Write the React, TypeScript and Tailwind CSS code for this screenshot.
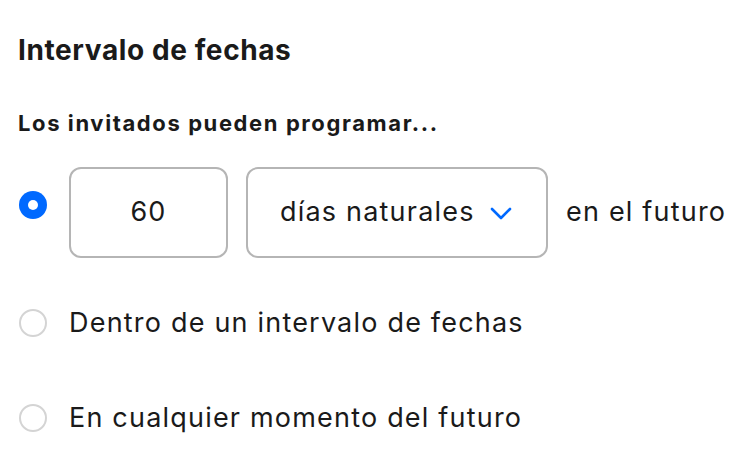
import { useState } from "react";

function Radio({ checked }: { checked: boolean }) {
  return checked ? (
    <span className="flex h-[28px] w-[28px] shrink-0 items-center justify-center rounded-full bg-[#0069ff]">
      <span className="block h-[10px] w-[10px] rounded-full bg-white" />
    </span>
  ) : (
    <span className="block h-[28px] w-[28px] shrink-0 rounded-full border-2 border-[#d4d4d4] bg-white" />
  );
}

export default function App() {
  const [choice] = useState("rolling");

  return (
    <div className="h-[456px] w-[756px] bg-white px-[18px] pt-[33px] font-['Inter',sans-serif] text-[#1a1a1a]">
      <h1 className="text-[28px] font-bold leading-[34px] tracking-[0.6px]">Intervalo de fechas</h1>
      <h2 className="mt-[42px] text-[22px] font-bold leading-[28px] tracking-[1.6px]">
        Los invitados pueden programar...
      </h2>

      {/* rolling days */}
      <div className="mt-[30px] flex items-start text-[27px] tracking-[1.2px]">
        <div className="mt-[24px] ml-[1px]">
          <Radio checked={choice === "rolling"} />
        </div>
        <div className="ml-[22px] flex h-[91px] w-[159px] items-center justify-center rounded-[12px] border-2 border-[#b5b5b5]">
          60
        </div>
        <div className="ml-[18px] flex h-[91px] w-[302px] items-center rounded-[12px] border-2 border-[#b5b5b5] pl-[32px]">
          <span>días naturales</span>
          <svg className="ml-[15px] mt-[2px]" width="22" height="13" viewBox="0 0 22 13" fill="none">
            <path d="M2 2l9 9 9-9" stroke="#0069ff" strokeWidth="2.6" strokeLinecap="round" strokeLinejoin="round" />
          </svg>
        </div>
        <div className="ml-[18px] flex h-[91px] items-center">en el futuro</div>
      </div>

      <div className="mt-[48px] flex items-center text-[27px] tracking-[1.2px]">
        <div className="ml-[1px]">
          <Radio checked={choice === "range"} />
        </div>
        <span className="ml-[22px] leading-[34px]">Dentro de un intervalo de fechas</span>
      </div>

      <div className="mt-[61px] flex items-center text-[27px] tracking-[1.2px]">
        <div className="ml-[1px]">
          <Radio checked={choice === "indefinite"} />
        </div>
        <span className="ml-[22px] leading-[34px]">En cualquier momento del futuro</span>
      </div>
    </div>
  );
}
